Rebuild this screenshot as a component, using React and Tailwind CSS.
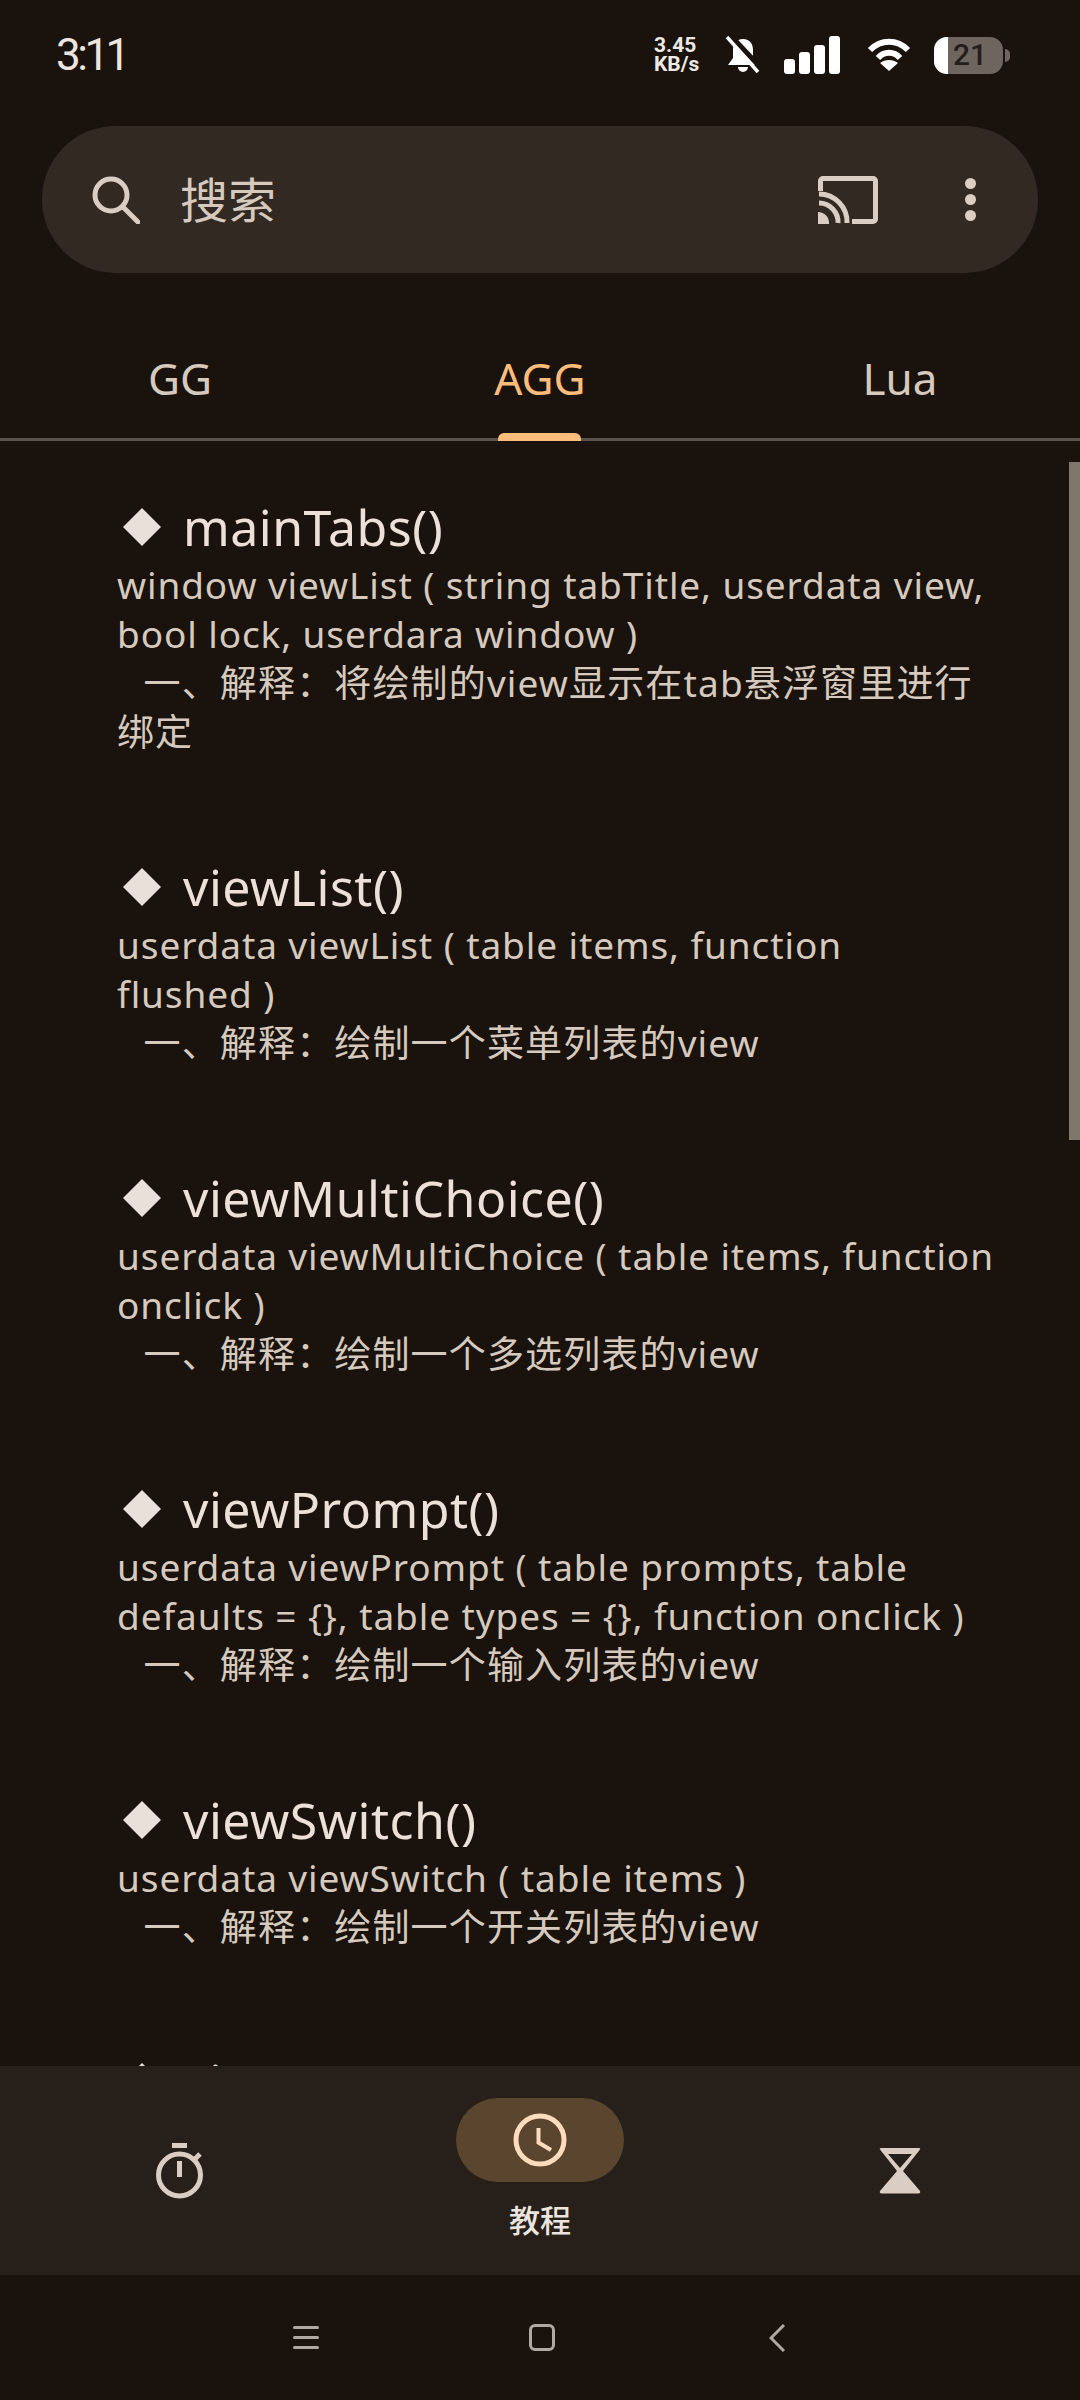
const FONT = '"Noto Sans","Noto Sans CJK SC",sans-serif';

function Item({ title, lines }) {
  return (
    <div>
      <div className="flex items-center h-[66px]">
        <svg width="40" height="40" viewBox="0 0 40 40" className="ml-[5px] shrink-0">
          <path d="M20 1L39 20L20 39L1 20Z" fill="#e8e0d9" />
        </svg>
        <span className="ml-[21px] text-[50px] tracking-[0.5px] leading-[56px] text-[#ece0d8] whitespace-nowrap">{title}</span>
      </div>
      {lines.map((l) => (
        <div key={l} className="text-[37px] tracking-[0.9px] leading-[49px] text-[#d6c9be] whitespace-pre">{l}</div>
      ))}
    </div>
  );
}

function Cjk({ text }) {
  return (
    <div className="pl-[5px] text-[37px] tracking-[1.15px] leading-[49px] text-[#d6c9be] whitespace-pre">{text}</div>
  );
}

const items = [
  ["mainTabs()", ["window viewList ( string tabTitle, userdata view,", "bool lock, userdara window )"], "  一、解释：将绘制的view显示在tab悬浮窗里进行", ["绑定"]],
  ["viewList()", ["userdata viewList ( table items, function", "flushed )"], "  一、解释：绘制一个菜单列表的view", []],
  ["viewMultiChoice()", ["userdata viewMultiChoice ( table items, function", "onclick )"], "  一、解释：绘制一个多选列表的view", []],
  ["viewPrompt()", ["userdata viewPrompt ( table prompts, table", "defaults = {}, table types = {}, function onclick )"], "  一、解释：绘制一个输入列表的view", []],
  ["viewSwitch()", ["userdata viewSwitch ( table items )"], "  一、解释：绘制一个开关列表的view", []],
];

export default function App() {
  return (
    <div className="w-[1080px] h-[2400px] flex flex-col bg-[#19120d] overflow-hidden" style={{ fontFamily: FONT }}>
      {/* status bar */}
      <div className="h-[110px] shrink-0 flex items-center justify-between pl-[56px] pr-[70px]">
        <span className="font-['Roboto'] text-[44px] tracking-[-3.500px] text-[#ece5df] leading-none">3:11</span>
        <div className="flex items-center">
          <div className="flex flex-col items-start font-['Roboto'] text-[#eee9e5] font-bold text-[21px] leading-[19px] w-[50px]">
            <span>3.45</span>
            <span>KB/s</span>
          </div>
          <svg width="36" height="38" viewBox="0 0 36 38" className="ml-[21px]" fill="#fff">
            <path d="M18 3c7 0 10 5 10 11v8l5 7H3l5-7v-8C8 8 11 3 18 3z" />
            <path d="M13 31h10a5 5 0 0 1-10 0z" />
            <path d="M6 0l30 32" stroke="#19120d" strokeWidth="5" />
            <path d="M2 1l31 35" stroke="#fff" strokeWidth="3.500" />
          </svg>
          <div className="flex items-end gap-[4px] ml-[23px]">
            <div className="w-[11px] h-[15px] rounded-[3px] bg-white" />
            <div className="w-[11px] h-[22px] rounded-[3px] bg-white" />
            <div className="w-[11px] h-[29px] rounded-[3px] bg-white" />
            <div className="w-[11px] h-[38px] rounded-[3px] bg-white" />
          </div>
          <svg width="44" height="34" viewBox="0 0 44 34" className="ml-[27px]" fill="none" stroke="#fff" strokeWidth="6">
            <path d="M3 12C14 1 30 1 41 12" />
            <path d="M11 20C17 13 27 13 33 20" />
            <path d="M22 33L13 25C18 21 26 21 31 25Z" fill="#fff" stroke="none" />
          </svg>
          <div className="relative ml-[23px] w-[69px] h-[37px] rounded-[13px] bg-[#6f655f] overflow-hidden flex items-center justify-center">
            <div className="absolute left-0 top-0 bottom-0 w-[14px] bg-white" />
            <span className="relative font-['Roboto'] font-medium text-[30px] leading-[36px] text-[#241e1b] pl-[3px]">21</span>
          </div>
          <div className="ml-[2px] w-[5px] h-[13px] rounded-r-full bg-[#6f655f]" />
        </div>
      </div>

      {/* search */}
      <div className="mt-[16px] mx-[42px] h-[147px] shrink-0 rounded-[74px] bg-[#322923] flex items-center pl-[50px] pr-[62px]">
        <svg width="48" height="48" viewBox="0 0 48 48" fill="none" stroke="#d9cdc4" strokeWidth="5" className="shrink-0">
          <circle cx="19" cy="19" r="16" />
          <path d="M31 31L46 46" strokeLinecap="round" />
        </svg>
        <span className="ml-[40px] text-[48px] leading-none text-[#d6c9be]">搜索</span>
        <svg width="60" height="48" viewBox="0 0 60 48" fill="none" stroke="#d9cdc4" strokeWidth="5" className="ml-auto shrink-0">
          <path d="M2.500 15V5a2.500 2.500 0 0 1 2.500-2.500h50a2.500 2.500 0 0 1 2.500 2.500v38a2.500 2.500 0 0 1-2.500 2.500H34" />
          <path d="M1 18a28 28 0 0 1 28 29" />
          <path d="M1 27a19 19 0 0 1 19 20" />
          <path d="M0 36a11 11 0 0 1 11 12H0Z" fill="#d9cdc4" stroke="none" />
        </svg>
        <div className="ml-[87px] flex flex-col gap-[5px]">
          <div className="w-[11px] h-[11px] rounded-full bg-[#d9cdc4]" />
          <div className="w-[11px] h-[11px] rounded-full bg-[#d9cdc4]" />
          <div className="w-[11px] h-[11px] rounded-full bg-[#d9cdc4]" />
        </div>
      </div>

      {/* tabs */}
      <div className="mt-[27px] h-[141px] shrink-0 grid grid-cols-3 border-b-[3px] border-[#5a534d] text-[44px]">
        <div className="flex items-center justify-center pt-[17px] text-[#d6c9be]">GG</div>
        <div className="relative flex items-center justify-center pt-[17px] text-[#fcbc7c]">
          AGG
          <div className="absolute left-[138px] bottom-[-3px] w-[83px] h-[8px] rounded-t-[6px] bg-[#fcbc7c]" />
        </div>
        <div className="flex items-center justify-center pt-[17px] text-[#d6c9be]">Lua</div>
      </div>

      {/* list */}
      <div className="relative flex-1 min-h-0 overflow-hidden">
        <div className="pl-[117px] pt-[53px] flex flex-col gap-[98px]">
          {items.map(([t, l, c, rest]) => (
            <div key={t}>
              <Item title={t} lines={l} />
              <Cjk text={c} />
              {rest.map((r) => (
                <div key={r} className="text-[37px] tracking-[0.9px] leading-[49px] text-[#d6c9be]">{r}</div>
              ))}
            </div>
          ))}
          <Item title="viewText()" lines={[]} />
        </div>
        <div className="absolute right-0 top-[21px] w-[11px] h-[678px] bg-[#7f766c]" />
      </div>

      {/* bottom nav */}
      <div className="h-[209px] shrink-0 bg-[#27201a] grid grid-cols-3">
        <div className="flex items-center justify-center">
          <svg width="48" height="56" viewBox="0 0 48 56" fill="none" stroke="#d9cdc4" strokeWidth="5">
            <path d="M16 2.500H31" />
            <circle cx="23.500" cy="32" r="21" />
            <path d="M23.500 18V34" />
            <path d="M38 17L44 11" />
          </svg>
        </div>
        <div className="flex flex-col items-center pt-[32px]">
          <div className="w-[168px] h-[84px] rounded-[42px] bg-[#5a452f] flex items-center justify-center">
            <svg width="54" height="54" viewBox="0 0 54 54" fill="none" stroke="#fcdcbd" strokeWidth="5">
              <circle cx="27" cy="27" r="24" />
              <path d="M25.500 15V29.500L38 37" strokeWidth="4" />
            </svg>
          </div>
          <span className="mt-[20px] text-[31px] leading-[36px] font-medium text-[#ece5df]">教程</span>
        </div>
        <div className="flex items-center justify-center">
          <svg width="42" height="46" viewBox="0 0 42 46" fill="#d9cdc4">
            <path fillRule="evenodd" d="M1 1.500Q0 0 2 0H40Q42 0 41 1.500L24 23L41 43Q42 45.500 39 45.500H3Q0 45.500 1 43L18 23ZM9 6L21 20L33 6Z" />
          </svg>
        </div>
      </div>

      {/* system nav */}
      <div className="h-[125px] shrink-0 flex items-center pl-[293px]">
        <div className="w-[26px] flex flex-col gap-[7px]">
          <div className="h-[3px] rounded-full bg-[#b0a8a2]" />
          <div className="h-[3px] rounded-full bg-[#b0a8a2]" />
          <div className="h-[3px] rounded-full bg-[#b0a8a2]" />
        </div>
        <div className="ml-[210px] w-[26px] h-[27px] rounded-[6px] border-[3px] border-[#b0a8a2]" />
        <svg width="16" height="28" viewBox="0 0 16 28" fill="none" stroke="#b0a8a2" strokeWidth="3" className="ml-[214px]">
          <path d="M15 1L2 14L15 27" />
        </svg>
      </div>
    </div>
  );
}
